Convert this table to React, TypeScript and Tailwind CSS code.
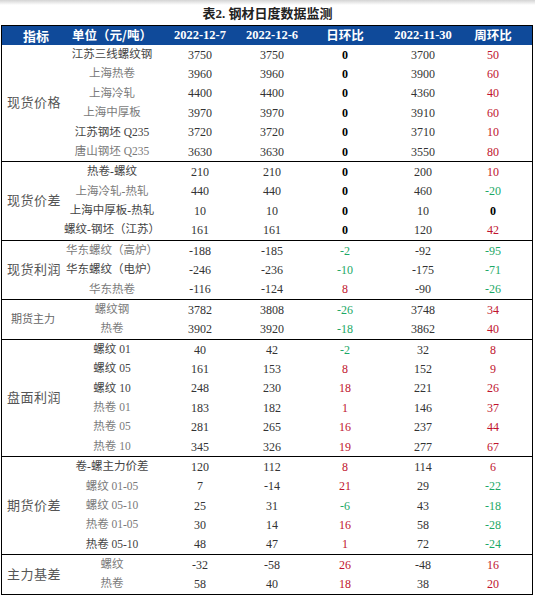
import React from 'react';

type Row = [string, boolean, string, string, string, string, string];

interface Section {
  title: string;
  small?: boolean;
  rows: Row[];
}

const sections: Section[] = [
  {
    title: '现货价格',
    rows: [
      ['江苏三线螺纹钢', true, '3750', '3750', '0', '3700', '50'],
      ['上海热卷', false, '3960', '3960', '0', '3900', '60'],
      ['上海冷轧', false, '4400', '4400', '0', '4360', '40'],
      ['上海中厚板', false, '3970', '3970', '0', '3910', '60'],
      ['江苏钢坯 Q235', true, '3720', '3720', '0', '3710', '10'],
      ['唐山钢坯 Q235', false, '3630', '3630', '0', '3550', '80'],
    ],
  },
  {
    title: '现货价差',
    rows: [
      ['热卷-螺纹', true, '210', '210', '0', '200', '10'],
      ['上海冷轧-热轧', false, '440', '440', '0', '460', '-20'],
      ['上海中厚板-热轧', true, '10', '10', '0', '10', '0'],
      ['螺纹-钢坯（江苏）', true, '161', '161', '0', '120', '42'],
    ],
  },
  {
    title: '现货利润',
    rows: [
      ['华东螺纹（高炉）', false, '-188', '-185', '-2', '-92', '-95'],
      ['华东螺纹（电炉）', true, '-246', '-236', '-10', '-175', '-71'],
      ['华东热卷', false, '-116', '-124', '8', '-90', '-26'],
    ],
  },
  {
    title: '期货主力',
    small: true,
    rows: [
      ['螺纹钢', false, '3782', '3808', '-26', '3748', '34'],
      ['热卷', false, '3902', '3920', '-18', '3862', '40'],
    ],
  },
  {
    title: '盘面利润',
    rows: [
      ['螺纹 01', true, '40', '42', '-2', '32', '8'],
      ['螺纹 05', true, '161', '153', '8', '152', '9'],
      ['螺纹 10', true, '248', '230', '18', '221', '26'],
      ['热卷 01', false, '183', '182', '1', '146', '37'],
      ['热卷 05', false, '281', '265', '16', '237', '44'],
      ['热卷 10', false, '345', '326', '19', '277', '67'],
    ],
  },
  {
    title: '期货价差',
    rows: [
      ['卷-螺主力价差', true, '120', '112', '8', '114', '6'],
      ['螺纹 01-05', false, '7', '-14', '21', '29', '-22'],
      ['螺纹 05-10', false, '25', '31', '-6', '43', '-18'],
      ['热卷 01-05', false, '30', '14', '16', '58', '-28'],
      ['热卷 05-10', true, '48', '47', '1', '72', '-24'],
    ],
  },
  {
    title: '主力基差',
    rows: [
      ['螺纹', false, '-32', '-58', '26', '-48', '16'],
      ['热卷', false, '58', '40', '18', '38', '20'],
    ],
  },
];

const font = { fontFamily: '"Liberation Serif", "Noto Sans CJK SC", serif' };
const cjk = { fontFamily: '"Noto Sans CJK SC", sans-serif' };

const changeClass = (v: string) => {
  const n = Number(v);
  if (n > 0) return 'text-[#c0142e]';
  if (n < 0) return 'text-[#1ca866]';
  return 'text-black font-bold';
};

const cols = 'grid grid-cols-[84px_92px_52px_94px_62px_78px]';

const DataRow: React.FC<{ row: Row }> = ({ row }) => {
  const [label, dark, a, b, d, c, w] = row;
  return (
    <div className={`${cols} h-[19.4px] items-center text-[12px] leading-none`}>
      <div className={`flex justify-center whitespace-nowrap text-[11.5px] ${dark ? 'text-[#444]' : 'text-[#7a7a7a]'}`}>{label}</div>
      <div className="flex justify-center text-[#333]">{a}</div>
      <div className="flex justify-center text-[#333]">{b}</div>
      <div className={`flex justify-center ${changeClass(d)}`}>{d}</div>
      <div className="flex justify-center text-[#333]">{c}</div>
      <div className={`flex justify-center ${changeClass(w)}`}>{w}</div>
    </div>
  );
};

const App: React.FC = () => {
  return (
    <div className="w-[535px] h-[595px] bg-white overflow-hidden" style={font}>
      <div className="h-[5px] bg-gradient-to-b from-[#d4d4d4] to-white" />
      <div className="h-[20px] flex items-center justify-center text-[13px] font-bold text-[#222] pb-[2px]">
        表2. 钢材日度数据监测
      </div>
      <div className="ml-[1px] w-[532px] border border-black">
        <div className="flex h-[19px] items-center bg-[#0f4a9a] text-white font-bold">
          <div className="w-[68px] flex justify-center text-[13px]" style={cjk}>指标</div>
          <div className={`${cols} items-center text-[12.5px]`}>
            <div className="flex justify-center whitespace-nowrap" style={cjk}>单位（元/吨）</div>
            <div className="flex justify-center">2022-12-7</div>
            <div className="flex justify-center whitespace-nowrap">2022-12-6</div>
            <div className="flex justify-center" style={cjk}>日环比</div>
            <div className="flex justify-center">2022-11-30</div>
            <div className="flex justify-center" style={cjk}>周环比</div>
          </div>
        </div>
        {sections.map((s, i) => (
          <div key={s.title} className={`flex ${i > 0 ? 'border-t border-black' : ''}`}>
            <div
              className={`w-[68px] flex items-center ${s.small ? 'text-[11px] pl-[9px] text-[#666]' : 'text-[13px] pl-[5px] tracking-[0.5px] text-[#555]'}`}
            >
              {s.title}
            </div>
            <div className="flex flex-col">
              {s.rows.map((r, j) => (
                <DataRow key={j} row={r} />
              ))}
            </div>
          </div>
        ))}
      </div>
    </div>
  );
};

export default App;
